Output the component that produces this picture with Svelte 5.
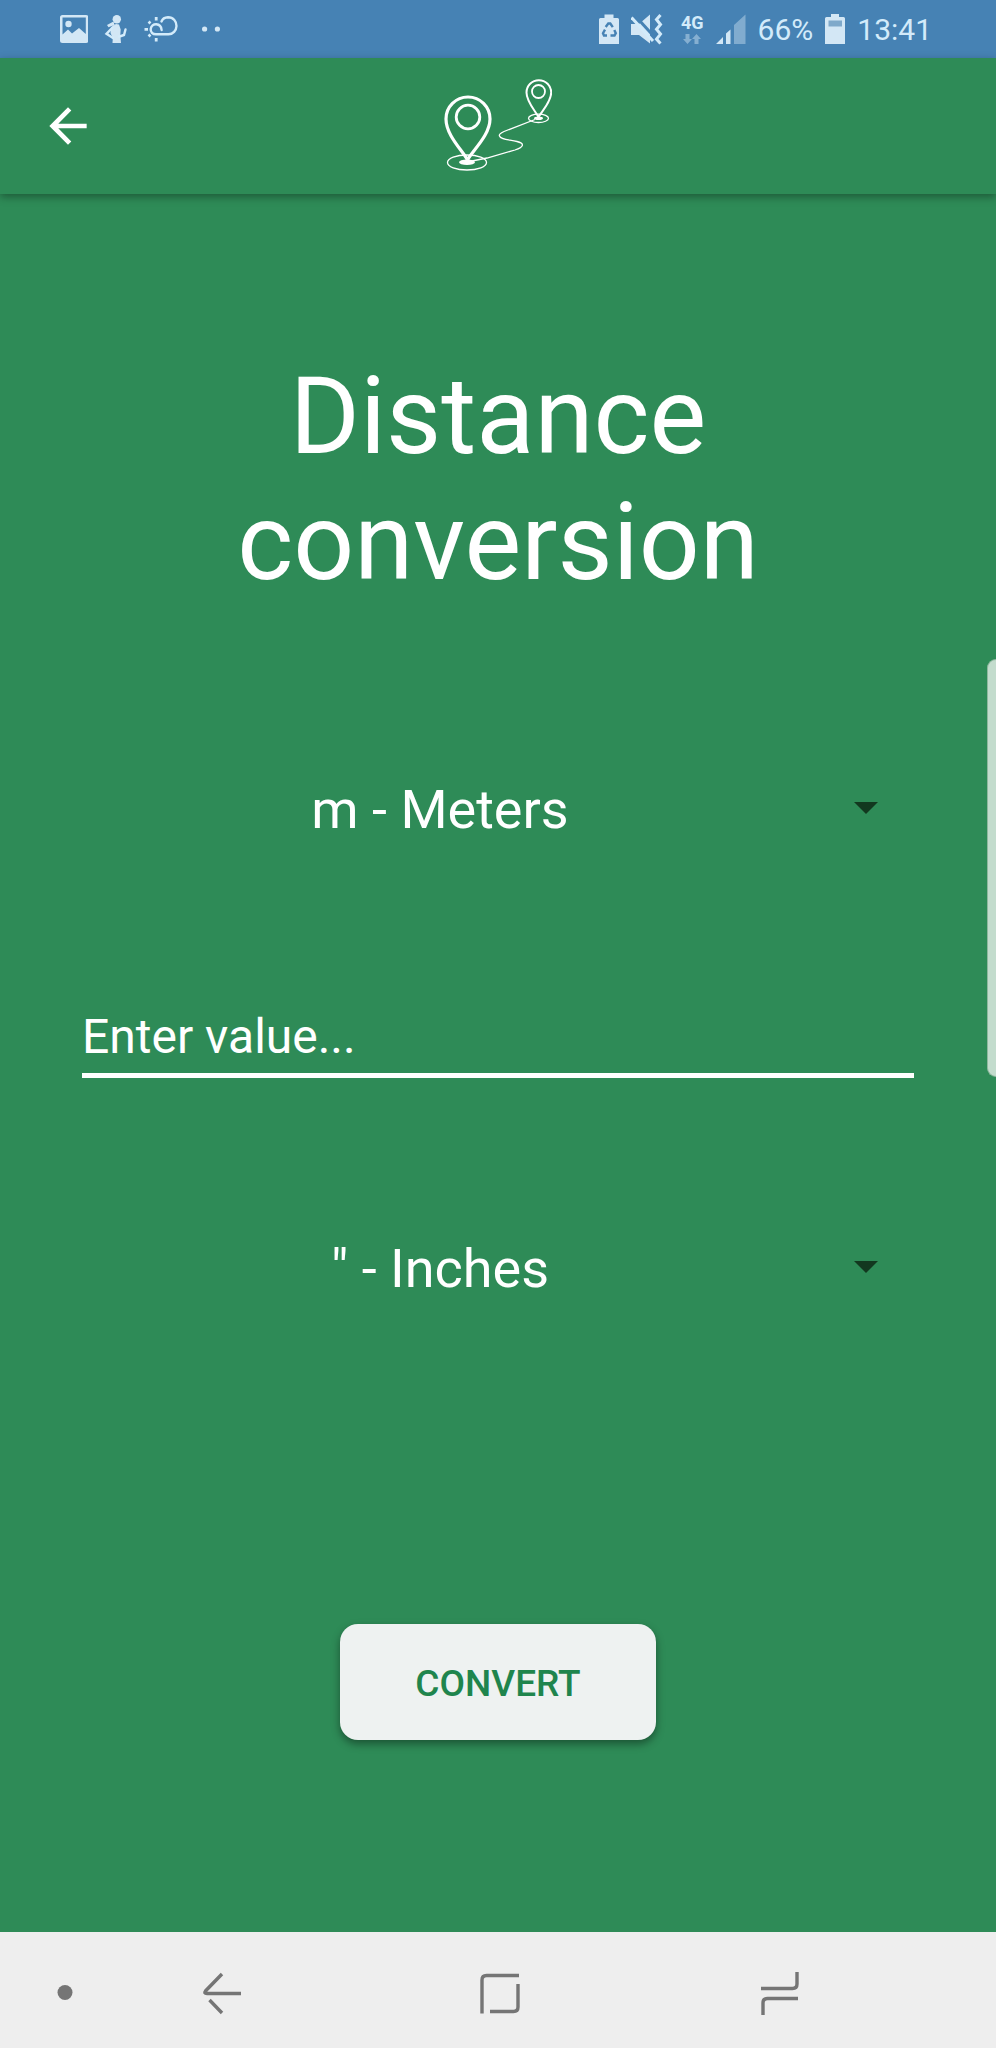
<script>
  const units = [
    { id: 'm', label: 'm - Meters' },
    { id: 'in', label: '" - Inches' },
    { id: 'ft', label: "' - Feet" },
    { id: 'km', label: 'km - Kilometers' }
  ];
  let from = $state('m');
  let to = $state('in');
  let value = $state('');
</script>

{#snippet unitPicker(id, label, current, onpick)}
  <div class="picker">
    <select {id} aria-label={label} value={current} onchange={(e) => onpick(e.currentTarget.value)}>
      {#each units as unit}
        <option value={unit.id}>{unit.label}</option>
      {/each}
    </select>
    <svg class="caret" width="24" height="12" viewBox="0 0 24 12" aria-hidden="true"><path d="M0 0h24L12 12z" /></svg>
  </div>
{/snippet}

<div class="screen">
  <div class="status">
    <div class="group left">
      <svg width="28" height="32" viewBox="60 13 28 32">
        <path fill-rule="evenodd" d="M62.500 15h23.500q2.500 0 2.500 2.500v23q0 2.500-2.500 2.500h-23.500q-2.500 0-2.500-2.500v-23q0-2.500 2.500-2.500zM62.500 17.500v17l5.500-5 4 4 7-5.500 6.800 6V17.500z" />
        <circle cx="68.500" cy="24" r="3.200" />
      </svg>
      <svg width="24" height="32" viewBox="105 13 24 32">
        <circle cx="117.800" cy="19.200" r="4.200" />
        <path d="M114.500 21.500l-6.500 3.500 1.500 2.200 6-2.200zM112 27.500q2.500-3 5-3.500l3 .5 1.700 5-.4 5.500.7 8h-8.500l.3-5-2.300-5z" />
        <path class="line" d="M113.500 27.500l-6 6.300 6.500 4.200M120.500 36.500l4.500-1.500 1.500-5.500" />
      </svg>
      <svg width="34" height="32" viewBox="144 13 34 32">
        <path class="line" d="M161.500 21.500Q163 17.500 168 17.300C173.500 17.300 176.600 21.500 176.500 26 176.300 30.500 173 34.300 168.500 34.300H156C152.500 34.300 150.500 32 150.700 29.200 151 26 153.500 24.200 156.300 24.300 159 24.500 161.300 26.500 161.600 30" />
        <g class="ray"><path d="M156.200 17v3.500M148.600 21.600l1.800 1.800M144.500 29.300h3.500M148.600 36.400l1.800-1.800M156.200 38v3.500" /></g>
      </svg>
      <svg class="dots" width="20" height="32" viewBox="202 13 20 32">
        <circle cx="204.600" cy="29" r="2.600" /><circle cx="217.400" cy="29" r="2.600" />
      </svg>
    </div>
    <div class="group right">
      <svg width="20" height="32" viewBox="599 13 20 32">
        <path d="M604.500 14.500h9V18h4q1.500 0 1.500 1.500v24.500h-20V19.500q0-1.500 1.500-1.500h4z" />
        <g class="cut"><path d="M605.700 27l2.600-3.500h2l2.500 3.700M614.300 30l1.500 3.200-1.300 2.300h-4M607 35.500h-3l-1-2.300 2-3.500" /></g>
      </svg>
      <svg class="mute" width="32" height="32" viewBox="632 13 32 32">
        <path d="M632 24h8l11-9.500v29L640 35h-8z" />
        <path class="gap" d="M634.500 14l21 23" />
        <path class="slash" d="M632.500 17.500l21.500 23.500" />
        <path class="wave" d="M661.500 15l-4 4.500 4 5-4 4.800 4 4.800-4 5 4 4.400" />
      </svg>
      <div class="network">
        <span>4G</span>
        <svg width="18" height="10" viewBox="685 34 18 10">
          <path d="M687.500 34h4v5h2.500l-4.500 5-4.500-5h2.500zM696.500 44v-5H694l4.500-5 4.500 5h-2.500v5z" />
        </svg>
      </div>
      <svg width="30" height="32" viewBox="717 13 30 32">
        <path d="M717 44l7-7v7zM727 44V33.500l4.500-4V44z" />
        <path opacity=".42" d="M735 44V25l11.500-10.500V44z" />
      </svg>
      <span class="reading">66%</span>
      <svg width="20" height="32" viewBox="825 13 20 32">
        <path d="M831 14h8v3h4.500q1.500 0 1.500 1.500V44h-20V18.500q0-1.500 1.500-1.500h4.500z" />
        <path fill="#7fa9ca" d="M828.500 20.500h13.500v6h-13.500z" />
      </svg>
      <span class="reading">13:41</span>
    </div>
  </div>

  <header>
    <button class="back" aria-label="Back">
      <svg width="56" height="56" viewBox="0 0 24 24"><path d="M20 11H7.830l5.590-5.590L12 4l-8 8 8 8 1.410-1.410L7.830 13H20z" /></svg>
    </button>
    <svg class="logo" width="108" height="94" viewBox="443 79 108 94" aria-hidden="true">
      <path stroke-width="3.200" d="M466.500 160C462 151 445 135.500 445 119A21.800 21.800 0 0 1 489 119C489 135.500 471 151 466.500 160z" />
      <circle cx="467" cy="117" r="11.800" stroke-width="2.800" />
      <ellipse cx="466" cy="162.500" rx="19.500" ry="7.500" stroke-width="1.300" />
      <ellipse class="solid" cx="466" cy="162.300" rx="8" ry="2.800" />
      <path stroke-width="2" d="M537.500 117C534.500 111 525.500 102 525.500 92.500A12.300 12.300 0 0 1 550.200 92.500C550.200 102 541 111 537.500 117z" />
      <circle cx="537.500" cy="91.500" r="6.500" stroke-width="1.800" />
      <ellipse cx="537.500" cy="118.300" rx="10" ry="4.200" stroke-width="1.300" />
      <ellipse class="solid" cx="537.500" cy="118.300" rx="4.500" ry="1.800" />
      <path stroke-width="1.300" d="M534 119.500L503 131.500Q497.500 134 498.500 136C499.500 139.500 507 139.500 516 141.500 524 143.500 523 147 514 150L486 158 466 162" />
    </svg>
  </header>

  <main>
    <h1>Distance conversion</h1>
    {@render unitPicker('from', 'Convert from', from, (v) => (from = v))}
    <input type="text" inputmode="decimal" aria-label="Value" placeholder="Enter value..." bind:value />
    {@render unitPicker('to', 'Convert to', to, (v) => (to = v))}
    <button class="convert">CONVERT</button>
  </main>

  <nav>
    <button aria-label="Pin bar"><svg width="16" height="40" viewBox="57 1973 16 40"><circle class="dot" cx="65" cy="1992.500" r="7.500" /></svg></button>
    <button aria-label="Back"><svg width="40" height="44" viewBox="202 1970 40 44"><path d="M222 1973l-16.500 17q-2 2.500 1.500 2.500h34M209.500 1999l12.500 13" /></svg></button>
    <button aria-label="Home"><svg width="40" height="44" viewBox="480 1970 40 44"><path d="M482 2012.500V1979q0-4.500 4.500-4.500H519M518 1983v23q0 4.500-4.500 4.500H490" /></svg></button>
    <button aria-label="Recent apps"><svg width="40" height="44" viewBox="760 1970 40 44"><path d="M797 1971v12q0 4.500-4.500 4.500H761M798 1997.500h-30.500q-4.500 0-4.500 4.500v12" /></svg></button>
  </nav>

  <div class="edge-handle"></div>
</div>

<style>
  :global(body) { margin: 0; background: #2e8b57; }
  .screen {
    position: relative;
    display: flex;
    flex-direction: column;
    min-height: 100vh;
    background: #2e8b57;
    color: #fff;
    font-family: Roboto, "Liberation Sans", sans-serif;
  }
  svg { display: block; flex: none; }
  button { border: 0; padding: 0; background: none; font-family: inherit; cursor: pointer; }

  .status {
    display: flex;
    align-items: center;
    justify-content: space-between;
    height: 58px;
    padding: 0 64px 0 60px;
    background: #4682b4;
    color: #d3ebfa;
  }
  .status svg { fill: #d3e7f5; }
  .group { display: flex; align-items: center; }
  .left { gap: 16px; }
  .dots { margin-left: 8px; }
  .right { gap: 12px; }
  .status .line { fill: none; stroke: #d3ebfa; stroke-width: 2.4; stroke-linecap: round; }
  .ray { stroke: #d3ebfa; stroke-width: 2.8; }
  .cut { fill: none; stroke: #4682b4; stroke-width: 2.4; }
  .gap { stroke: #4682b4; stroke-width: 3; }
  .slash { stroke: #d3ebfa; stroke-width: 3; }
  .wave { fill: none; stroke: #d3ebfa; stroke-width: 3; }
  .network {
    display: flex;
    flex-direction: column;
    align-items: center;
    gap: 2px;
    margin-left: 6px;
    font-size: 18px;
    font-weight: 700;
    line-height: 18px;
  }
  .network svg { opacity: .45; }
  .reading { font-size: 30px; line-height: 32px; padding-top: 2px; }

  header {
    display: grid;
    grid-template-columns: 1fr auto 1fr;
    align-items: center;
    height: 136px;
    padding: 0 40px;
    box-shadow: 0 3px 8px rgba(0, 0, 0, .35);
  }
  .back { justify-self: start; }
  .back svg { fill: #fff; }
  .logo { fill: none; stroke: #fff; }
  .logo .solid { fill: #fff; stroke: none; }

  main {
    flex: 1;
    display: flex;
    flex-direction: column;
    padding: 160px 82px;
  }
  h1 {
    align-self: center;
    max-width: 620px;
    margin: 0 0 172px;
    font-size: 107px;
    font-weight: 400;
    line-height: 126px;
    text-align: center;
  }
  .picker { display: grid; align-items: center; }
  select {
    grid-area: 1 / 1;
    appearance: none;
    width: 100%;
    height: 64px;
    margin: 0;
    padding: 0 116px 0 0;
    border: 0;
    background: none;
    color: #fff;
    font: 400 54px/64px Roboto, "Liberation Sans", sans-serif;
    text-align: center;
    text-align-last: center;
  }
  option { color: #222; }
  .caret {
    grid-area: 1 / 1;
    justify-self: end;
    margin: 0 36px 4px 0;
    fill: #12381f;
    pointer-events: none;
  }
  input {
    box-sizing: content-box;
    height: 56px;
    margin: 167px 0 159px;
    padding: 0 0 8px;
    border: 0;
    border-bottom: 5px solid #fff;
    border-radius: 0;
    background: none;
    color: #fff;
    font: 400 48px/56px Roboto, "Liberation Sans", sans-serif;
  }
  input::placeholder { color: #fff; opacity: 1; }
  .convert {
    align-self: center;
    margin-top: 323px;
    padding: 4px 75px 0;
    border-radius: 18px;
    background: #eef2f1;
    box-shadow: 0 4px 8px rgba(0, 0, 0, .4);
    color: #1f854d;
    font-size: 37px;
    font-weight: 500;
    line-height: 112px;
  }

  nav {
    display: grid;
    grid-template-columns: 129fr 186fr 370fr 190fr 121fr;
    align-items: center;
    height: 116px;
    padding-top: 6px;
    box-sizing: border-box;
    background: #eee;
  }
  nav button { justify-self: center; }
  nav svg { fill: none; stroke: #757575; stroke-width: 3.4; }
  nav .dot { fill: #757575; stroke: none; }

  .edge-handle {
    position: absolute;
    top: 659px;
    right: 0;
    width: 8px;
    height: 416px;
    border: 1px solid #8fb79f;
    border-right: 0;
    border-radius: 10px 0 0 10px;
    background: #c3dccd;
  }
</style>
